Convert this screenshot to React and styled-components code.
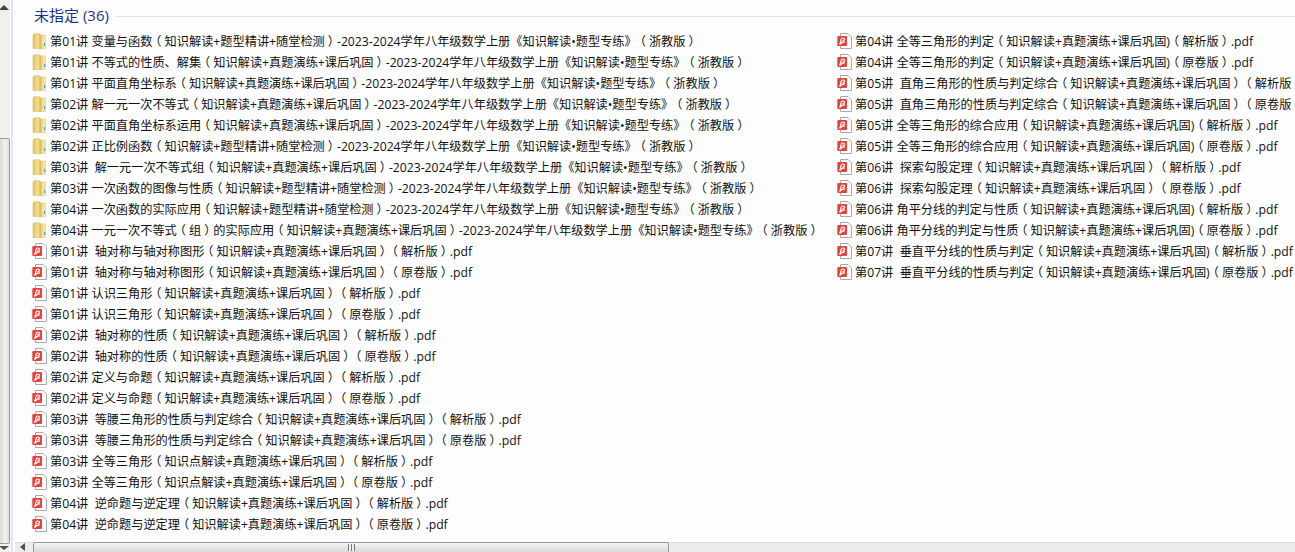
import React from "react";
import styled, { createGlobalStyle } from "styled-components";

const leftFiles = [
  ["folder", "第01讲 变量与函数（知识解读+题型精讲+随堂检测）-2023-2024学年八年级数学上册《知识解读•题型专练》（浙教版）"],
  ["folder", "第01讲 不等式的性质、解集（知识解读+真题演练+课后巩固）-2023-2024学年八年级数学上册《知识解读•题型专练》（浙教版）"],
  ["folder", "第01讲 平面直角坐标系（知识解读+真题演练+课后巩固）-2023-2024学年八年级数学上册《知识解读•题型专练》（浙教版）"],
  ["folder", "第02讲 解一元一次不等式（知识解读+真题演练+课后巩固）-2023-2024学年八年级数学上册《知识解读•题型专练》（浙教版）"],
  ["folder", "第02讲 平面直角坐标系运用（知识解读+真题演练+课后巩固）-2023-2024学年八年级数学上册《知识解读•题型专练》（浙教版）"],
  ["folder", "第02讲 正比例函数（知识解读+题型精讲+随堂检测）-2023-2024学年八年级数学上册《知识解读•题型专练》（浙教版）"],
  ["folder", "第03讲  解一元一次不等式组（知识解读+真题演练+课后巩固）-2023-2024学年八年级数学上册《知识解读•题型专练》（浙教版）"],
  ["folder", "第03讲 一次函数的图像与性质（知识解读+题型精讲+随堂检测）-2023-2024学年八年级数学上册《知识解读•题型专练》（浙教版）"],
  ["folder", "第04讲 一次函数的实际应用（知识解读+题型精讲+随堂检测）-2023-2024学年八年级数学上册《知识解读•题型专练》（浙教版）"],
  ["folder", "第04讲 一元一次不等式（组）的实际应用（知识解读+真题演练+课后巩固）-2023-2024学年八年级数学上册《知识解读•题型专练》（浙教版）"],
  ["pdf", "第01讲  轴对称与轴对称图形（知识解读+真题演练+课后巩固）（解析版）.pdf"],
  ["pdf", "第01讲  轴对称与轴对称图形（知识解读+真题演练+课后巩固）（原卷版）.pdf"],
  ["pdf", "第01讲 认识三角形（知识解读+真题演练+课后巩固）（解析版）.pdf"],
  ["pdf", "第01讲 认识三角形（知识解读+真题演练+课后巩固）（原卷版）.pdf"],
  ["pdf", "第02讲  轴对称的性质（知识解读+真题演练+课后巩固）（解析版）.pdf"],
  ["pdf", "第02讲  轴对称的性质（知识解读+真题演练+课后巩固）（原卷版）.pdf"],
  ["pdf", "第02讲 定义与命题（知识解读+真题演练+课后巩固）（解析版）.pdf"],
  ["pdf", "第02讲 定义与命题（知识解读+真题演练+课后巩固）（原卷版）.pdf"],
  ["pdf", "第03讲  等腰三角形的性质与判定综合（知识解读+真题演练+课后巩固）（解析版）.pdf"],
  ["pdf", "第03讲  等腰三角形的性质与判定综合（知识解读+真题演练+课后巩固）（原卷版）.pdf"],
  ["pdf", "第03讲 全等三角形（知识点解读+真题演练+课后巩固）（解析版）.pdf"],
  ["pdf", "第03讲 全等三角形（知识点解读+真题演练+课后巩固）（原卷版）.pdf"],
  ["pdf", "第04讲  逆命题与逆定理（知识解读+真题演练+课后巩固）（解析版）.pdf"],
  ["pdf", "第04讲  逆命题与逆定理（知识解读+真题演练+课后巩固）（原卷版）.pdf"],
];

const rightFiles = [
  ["pdf", "第04讲 全等三角形的判定（知识解读+真题演练+课后巩固)（解析版）.pdf"],
  ["pdf", "第04讲 全等三角形的判定（知识解读+真题演练+课后巩固)（原卷版）.pdf"],
  ["pdf", "第05讲  直角三角形的性质与判定综合（知识解读+真题演练+课后巩固）（解析版）.pdf"],
  ["pdf", "第05讲  直角三角形的性质与判定综合（知识解读+真题演练+课后巩固）（原卷版）.pdf"],
  ["pdf", "第05讲 全等三角形的综合应用（知识解读+真题演练+课后巩固)（解析版）.pdf"],
  ["pdf", "第05讲 全等三角形的综合应用（知识解读+真题演练+课后巩固)（原卷版）.pdf"],
  ["pdf", "第06讲  探索勾股定理（知识解读+真题演练+课后巩固）（解析版）.pdf"],
  ["pdf", "第06讲  探索勾股定理（知识解读+真题演练+课后巩固）（原卷版）.pdf"],
  ["pdf", "第06讲 角平分线的判定与性质（知识解读+真题演练+课后巩固)（解析版）.pdf"],
  ["pdf", "第06讲 角平分线的判定与性质（知识解读+真题演练+课后巩固)（原卷版）.pdf"],
  ["pdf", "第07讲  垂直平分线的性质与判定（知识解读+真题演练+课后巩固)（解析版）.pdf"],
  ["pdf", "第07讲  垂直平分线的性质与判定（知识解读+真题演练+课后巩固)（原卷版）.pdf"],
];

function FolderIcon() {
  return (
    <svg width="16" height="16" viewBox="0 0 16 16">
      <defs>
        <linearGradient id="folderBack" x1="0" y1="0" x2="1" y2="0">
          <stop offset="0" stopColor="#e6c869" />
          <stop offset="1" stopColor="#f8edb8" />
        </linearGradient>
        <linearGradient id="folderFront" x1="0" y1="0" x2="1" y2="0">
          <stop offset="0" stopColor="#e2c25c" />
          <stop offset="0.6" stopColor="#f3e08f" />
          <stop offset="1" stopColor="#d9b955" />
        </linearGradient>
      </defs>
      <path d="M7 2 L13.5 2 L13.5 15.5 L7 15.5 Z" fill="url(#folderBack)" stroke="#d9c376" strokeWidth="0.5" />
      <path d="M1 2 L2 0.7 L7.5 0.7 L9 2.5 L9 15.5 L1 15.5 Z" fill="url(#folderFront)" stroke="#d6bb62" strokeWidth="0.5" />
      <rect x="12" y="10" width="1.2" height="3" fill="#5aa0d8" />
    </svg>
  );
}

function PdfIcon() {
  return (
    <svg width="16" height="16" viewBox="0 0 16 16">
      <path d="M3.5 0.5 L11 0.5 L14.5 4 L14.5 15.5 L3.5 15.5 Z" fill="#fff" stroke="#a9a9a9" />
      <rect x="0.3" y="3" width="9.7" height="10" rx="1" fill="#e8403a" />
      <path d="M2.5 11.5 C4.5 9.5 3 5 5.5 5 C8.3 5 8.3 7.5 5.5 7.7 M8 9 C6 8.6 4.5 9.5 3.2 11" fill="none" stroke="#fff" strokeWidth="1.2" />
    </svg>
  );
}

// the fullwidth brackets sit centred in their cell in the reference
function splitName(name) {
  return name.split(/([（）])/).map((part, i) =>
    part === "（" || part === "）" ? <Bracket key={i}>{part}</Bracket> : part
  );
}

function FileRow({ kind, name }) {
  return (
    <Row>
      <IconSlot>{kind === "folder" ? <FolderIcon /> : <PdfIcon />}</IconSlot>
      <Name>{splitName(name)}</Name>
    </Row>
  );
}

export default function App() {
  return (
    <>
      <GlobalStyle />
      <Window>
        <VScroll>
          <ArrowUp />
          <VTrack />
          <VThumb />
          <ArrowDown />
        </VScroll>
        <Divider />
        <Main>
          <Content>
            <GroupHeader>
              <GroupTitle>未指定 (36)</GroupTitle>
              <GroupLine />
            </GroupHeader>
            <Columns>
              <LeftColumn>
                {leftFiles.map(([kind, name]) => (
                  <FileRow key={name} kind={kind} name={name} />
                ))}
              </LeftColumn>
              <RightColumn>
                {rightFiles.map(([kind, name]) => (
                  <FileRow key={name} kind={kind} name={name} />
                ))}
              </RightColumn>
            </Columns>
          </Content>
          <HScroll>
            <ArrowLeft />
            <HThumb>
              <Grip />
            </HThumb>
          </HScroll>
        </Main>
      </Window>
    </>
  );
}

const GlobalStyle = createGlobalStyle`
  html, body {
    margin: 0;
    height: 100%;
    overflow: hidden;
    background: #fdfdfd;
  }
  #root {
    height: 100%;
  }
`;

const Window = styled.div`
  display: flex;
  width: 1295px;
  height: 552px;
  overflow: hidden;
  font-family: "Open Sans", "Noto Sans CJK SC", sans-serif;
`;

const VScroll = styled.div`
  display: flex;
  flex-direction: column;
  flex: none;
  width: 10px;
  background: #f0f0f0;
`;

const VTrack = styled.div`
  height: 120px;
`;

const VThumb = styled.div`
  flex: 1;
  box-sizing: border-box;
  border: 1px solid #9a9a9a;
  border-left: none;
  border-radius: 0 2px 2px 0;
  background: linear-gradient(90deg, #d9d9d9, #f2f2f2 60%, #dcdcdc);
`;

const ArrowUp = styled.div`
  flex: none;
  width: 0;
  height: 0;
  margin: 5px 0 8px -1px;
  border-left: 5px solid transparent;
  border-right: 5px solid transparent;
  border-bottom: 5px solid #404040;
`;

const ArrowDown = styled.div`
  flex: none;
  width: 0;
  height: 0;
  margin: 2px 0 2px -1px;
  border-left: 5px solid transparent;
  border-right: 5px solid transparent;
  border-top: 4px solid #505050;
`;

const Divider = styled.div`
  flex: none;
  width: 2px;
  margin-left: 1px;
  background: #dce7f5;
`;

const Main = styled.div`
  flex: 1;
  min-width: 0;
  display: flex;
  flex-direction: column;
`;

const Content = styled.div`
  flex: 1;
  min-height: 0;
  overflow: hidden;
  padding-top: 6px;
  background: #fdfdfd;
`;

const GroupHeader = styled.div`
  display: flex;
  align-items: center;
  height: 20px;
  padding-left: 21px;
  gap: 6px;
`;

const GroupTitle = styled.span`
  align-self: flex-start;
  font-size: 15px;
  line-height: 18px;
  color: #1e3287;
  white-space: nowrap;
`;

const GroupLine = styled.div`
  flex: 1;
  height: 1px;
  background: #e2e2e2;
`;

const Columns = styled.div`
  display: flex;
  padding: 4px 0 0 19px;
`;

const LeftColumn = styled.div`
  flex: none;
  width: 805px;
`;

const RightColumn = styled.div`
  flex: 1;
  min-width: 0;
  overflow: hidden;
`;

const Row = styled.div`
  display: flex;
  align-items: center;
  height: 21px;
`;

const IconSlot = styled.span`
  display: flex;
  flex: none;
  width: 18px;

  svg {
    display: block;
  }
`;

const Name = styled.span`
  padding-top: 2px;
  font-size: 12.2px;
  line-height: 21px;
  color: #111;
  white-space: pre;
  text-spacing-trim: space-all;
`;

const Bracket = styled.span`
  padding: 0 3.05px;
  font-feature-settings: "halt";
`;

const HScroll = styled.div`
  flex: none;
  display: flex;
  align-items: center;
  height: 10px;
  margin-left: 2px;
  background: #ececec;
  box-shadow: inset 0 1px 0 #dedede;
`;

const ArrowLeft = styled.div`
  flex: none;
  width: 0;
  height: 0;
  margin-left: 5px;
  margin-right: 8px;
  border-top: 4px solid transparent;
  border-bottom: 4px solid transparent;
  border-right: 5px solid #505050;
`;

const HThumb = styled.div`
  flex: none;
  display: flex;
  justify-content: center;
  align-items: center;
  box-sizing: border-box;
  width: 636px;
  height: 10px;
  border: 1px solid #9a9a9a;
  border-bottom: none;
  border-radius: 2px 2px 0 0;
  background: linear-gradient(180deg, #f4f4f4, #d9d9d9);
`;

const Grip = styled.div`
  width: 7px;
  height: 7px;
  background: repeating-linear-gradient(90deg, #777 0 1px, #eee 1px 3px);
`;
